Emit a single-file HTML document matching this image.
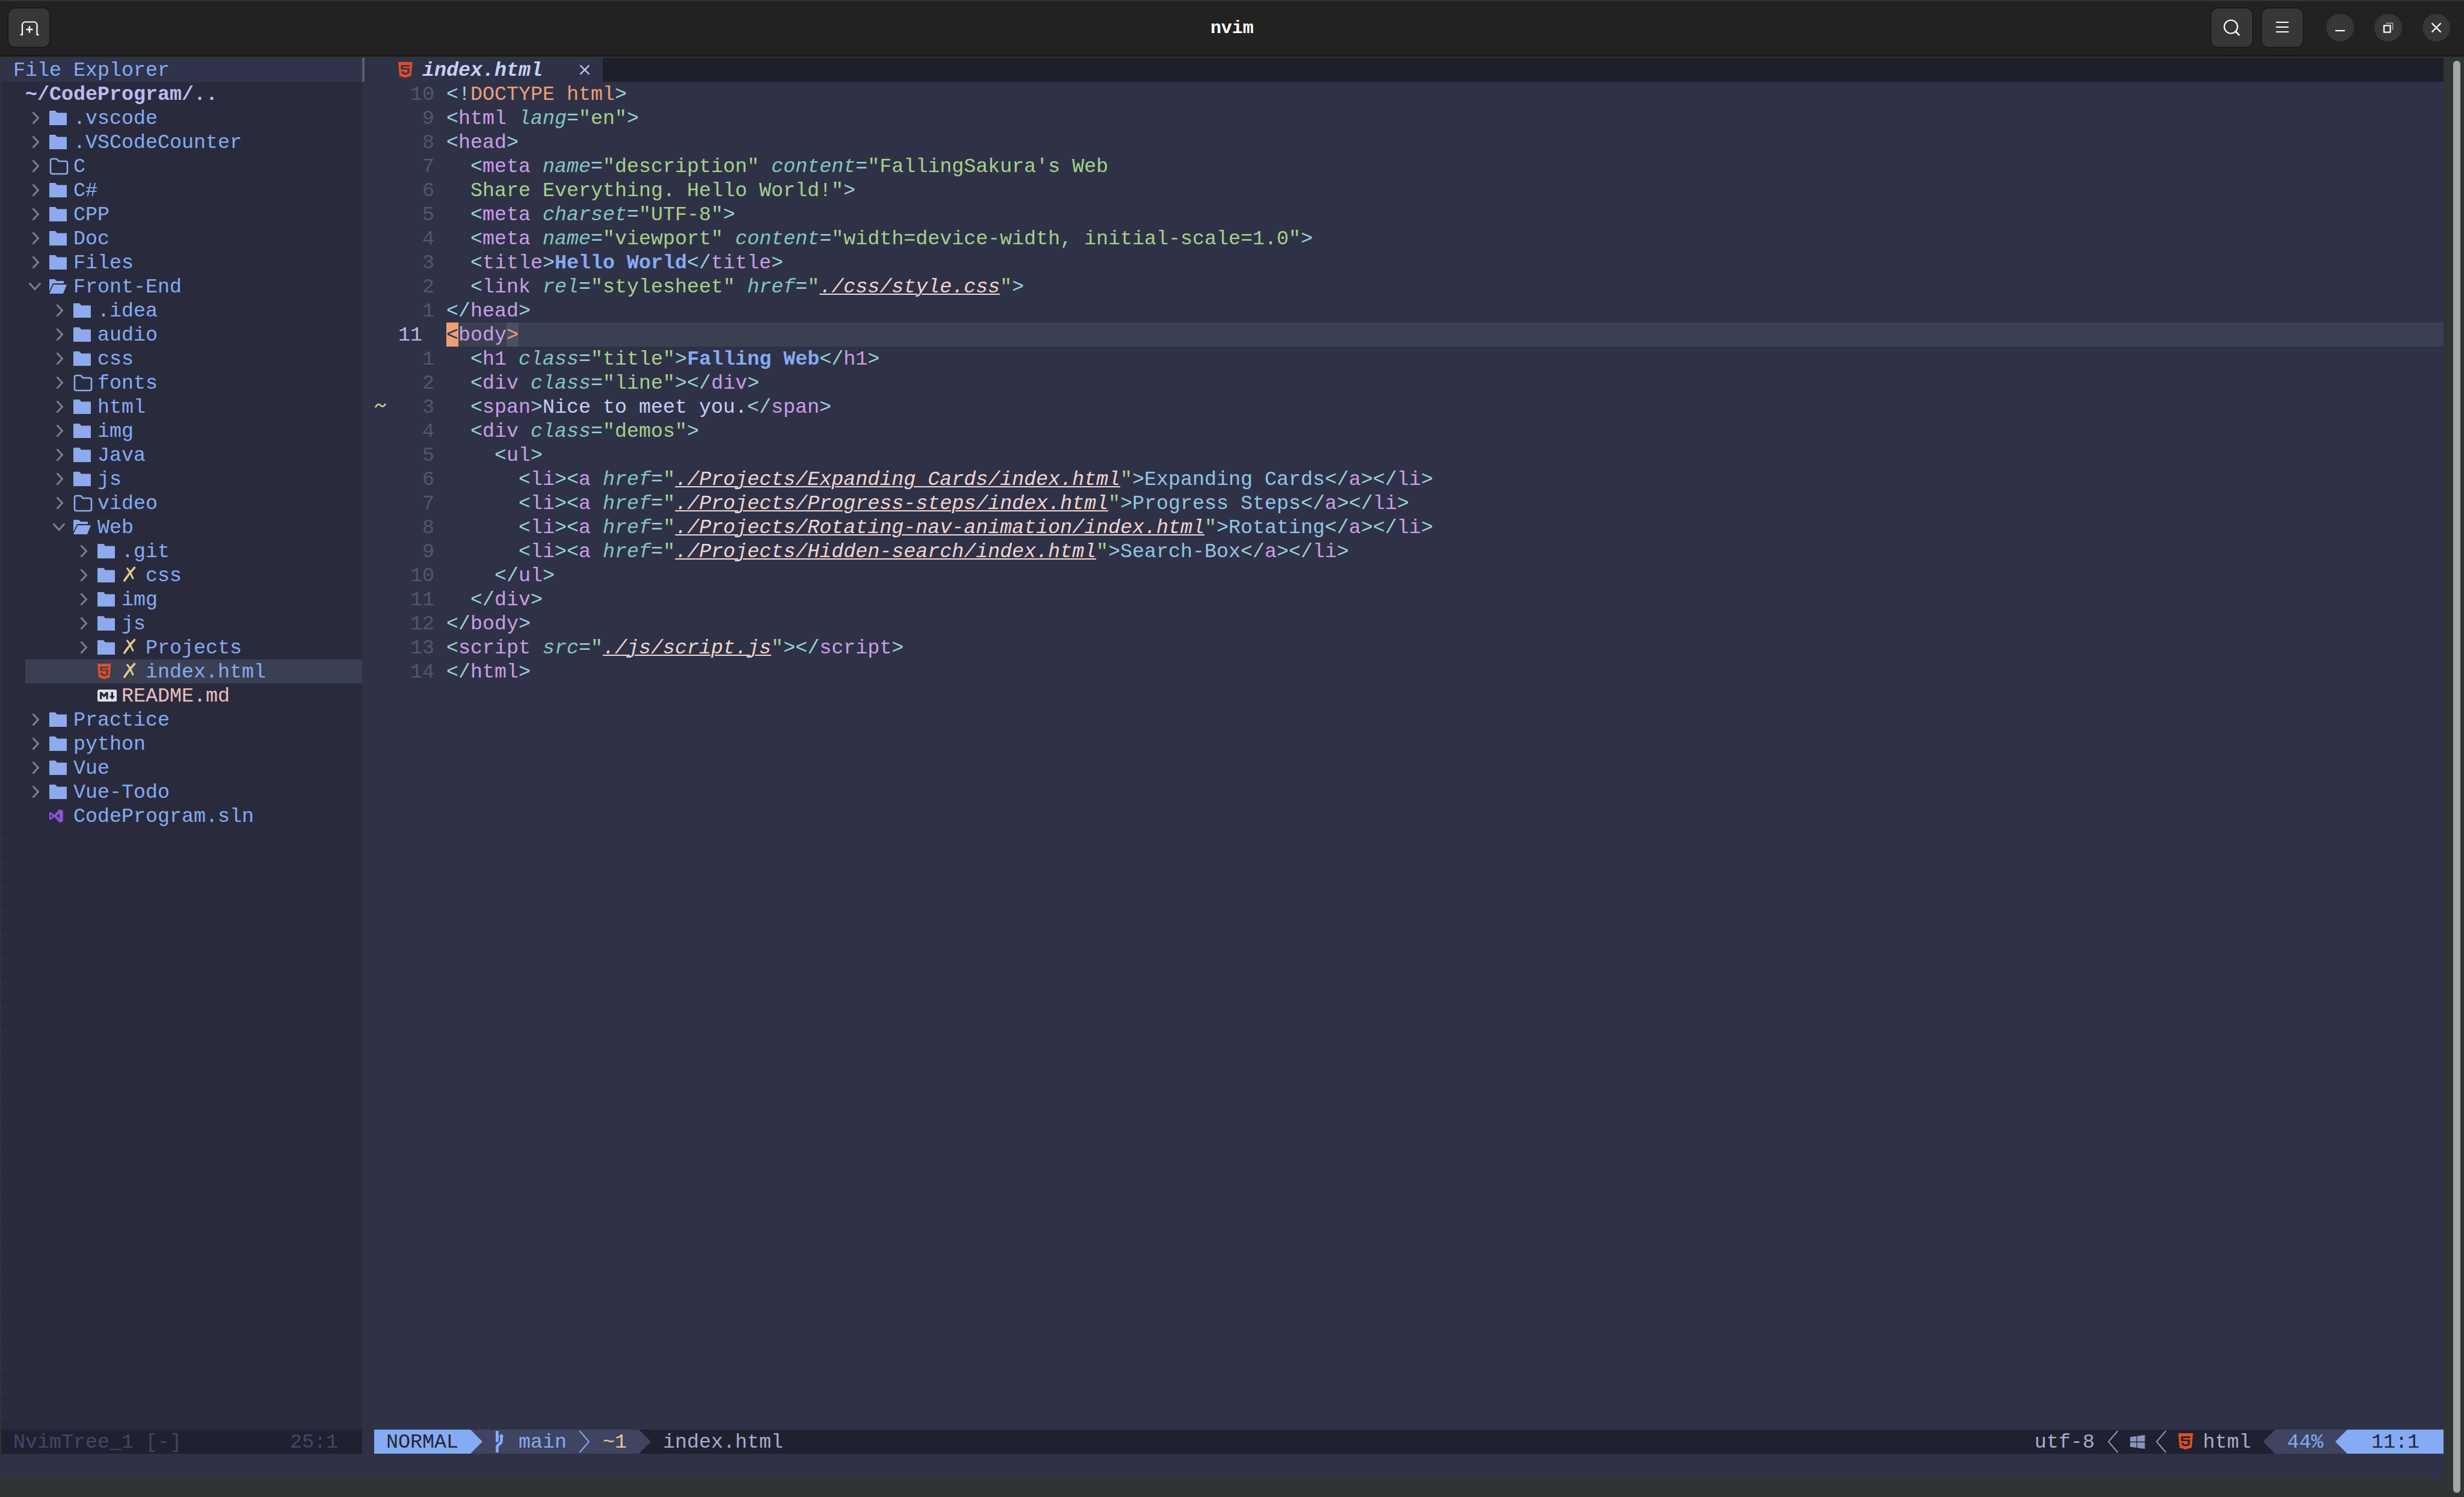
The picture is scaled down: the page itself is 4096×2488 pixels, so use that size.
<!DOCTYPE html><html><head><meta charset="utf-8"><style>
html,body{margin:0;padding:0}
body{width:4096px;height:2488px;overflow:hidden;position:relative;background:#2f3434;font-family:"Liberation Mono",monospace}
.a{position:absolute}
.t{position:absolute;height:40px;line-height:40px;white-space:pre;font-size:33.34px;font-family:"Liberation Mono",monospace}
.d{color:#99d1db} .tg{color:#ca9ee6} .at{color:#81c8be;font-style:italic} .s{color:#a6d189}
.u{color:#f2d5cf;font-style:italic;text-decoration:underline;text-underline-offset:2px;text-decoration-thickness:2px}
.p{color:#ef9f76} .x{color:#c6d0f5} .b{color:#84abf4;font-weight:bold} .l{color:#8fc6e4}
.ln{color:#51576d}
.fn{color:#84abf4}
</style></head><body>
<div class="a" style="left:0px;top:0px;width:4096px;height:92px;background:#222222;"></div>
<div class="a" style="left:0px;top:0px;width:4096px;height:2px;background:#333333;"></div>
<div class="a" style="left:0px;top:92px;width:4096px;height:2px;background:#181818;"></div>
<div class="a" style="left:14px;top:14px;width:68px;height:64px;background:#373737;border-radius:11px;box-shadow:0 0 0 1.5px #171717"></div>
<svg class="a" style="left:14px;top:14px" width="68" height="64" viewBox="0 0 68 64"><path d="M19.8 43.6 H23 V27.5 a5 5 0 0 1 5 -5 H42.5 a5 5 0 0 1 5 5 V43.6 H50.5" fill="none" stroke="#fff" stroke-width="2.2"/><path d="M35 29.5 V40.5 M29.5 35 H40.5" stroke="#fff" stroke-width="2.4"/></svg>
<div class="a" style="left:0;top:0;width:4096px;height:92px;line-height:94px;text-align:center;color:#fff;font-weight:bold;font-size:29.8px;font-family:'Liberation Mono',monospace">nvim</div>
<div class="a" style="left:3676px;top:14px;width:68px;height:64px;background:#373737;border-radius:11px;box-shadow:0 0 0 1.5px #171717"></div>
<svg class="a" style="left:3676px;top:14px" width="68" height="64" viewBox="0 0 68 64"><circle cx="32.5" cy="30.5" r="11" fill="none" stroke="#fff" stroke-width="2.2"/><path d="M40.5 38.5 L46 44" stroke="#fff" stroke-width="2.6" stroke-linecap="round"/></svg>
<div class="a" style="left:3760px;top:14px;width:68px;height:64px;background:#373737;border-radius:11px;box-shadow:0 0 0 1.5px #171717"></div>
<svg class="a" style="left:3760px;top:14px" width="68" height="64" viewBox="0 0 68 64"><path d="M23.5 23 H44.5 M23.5 31 H44.5 M23.5 39 H44.5" stroke="#fff" stroke-width="2.2"/></svg>
<div class="a" style="left:3867px;top:23px;width:46px;height:46px;border-radius:50%;background:#373737"></div>
<div class="a" style="left:3947px;top:23px;width:46px;height:46px;border-radius:50%;background:#373737"></div>
<div class="a" style="left:4027px;top:23px;width:46px;height:46px;border-radius:50%;background:#373737"></div>
<svg class="a" style="left:3867px;top:23px" width="46" height="46"><path d="M15 28 H31" stroke="#fff" stroke-width="2.2"/></svg>
<svg class="a" style="left:3947px;top:23px" width="46" height="46"><rect x="16" y="19.5" width="10.5" height="11" fill="none" stroke="#fff" stroke-width="2.2"/><path d="M19.5 15.5 H30.5 V27" fill="none" stroke="#9a9a9a" stroke-width="1.8"/></svg>
<svg class="a" style="left:4027px;top:23px" width="46" height="46"><path d="M15.5 15.5 L30.5 30.5 M30.5 15.5 L15.5 30.5" stroke="#fff" stroke-width="2.4"/></svg>
<div class="a" style="left:2px;top:96px;width:600px;height:2280px;background:#292b3d;"></div>
<div class="a" style="left:602px;top:96px;width:3460px;height:2360px;background:#2f3247;"></div>
<div class="a" style="left:2px;top:2416px;width:600px;height:40px;background:#2f3247;"></div>
<div class="a" style="left:2px;top:96px;width:600px;height:40px;background:#30334a;"></div>
<div class="a" style="left:1002px;top:96px;width:3060px;height:40px;background:#1d1f2c;"></div>
<div class="a" style="left:602px;top:96px;width:4px;height:40px;background:#5b5f73;"></div>
<div class="a" style="left:602px;top:136px;width:6px;height:2240px;background:#2e3243;"></div>
<div class="a" style="left:4078px;top:101px;width:12px;height:2380px;border-radius:6px;background:#a6a8a8"></div>
<div class="t" style="left:22px;top:97px;"><span class="fn">File Explorer</span></div>
<svg class="a" style="left:662px;top:102.7px" width="23.5" height="26.2" viewBox="0 0 22.5 25.7" preserveAspectRatio="none"><path fill-rule="evenodd" fill="#e44d26" d="M0 0 H22.5 L20.5 22.8 L11.25 25.7 L2 22.8 Z M4.3 5.1 H18.5 V7.6 H7.4 V10 H17.8 V18.6 L11.2 20.9 L5.3 18.6 V15 H8.3 V16.9 L11.2 17.9 L14.7 16.9 V12.3 H4.3 Z"/></svg>
<div class="t" style="left:702px;top:97px;font-weight:bold;font-style:italic"><span class="x">index.html</span></div>
<svg class="a" style="left:962px;top:106px" width="20" height="20"><path d="M2.5 2.5 L17.5 17.5 M17.5 2.5 L2.5 17.5" stroke="#c6d0f5" stroke-width="2.3"/></svg>
<div class="t" style="left:42px;top:137px;color:#babbf1;font-weight:bold">~/CodeProgram/..</div>
<div class="a" style="left:42px;top:1096px;width:560px;height:40px;background:#3b3f52;"></div>
<svg class="a" style="left:48px;top:184px" width="24" height="24"><path d="M7.3 3.2 L15.5 12 L7.3 20.8" fill="none" stroke="#7c8196" stroke-width="2.9" stroke-linecap="round"/></svg>
<svg class="a" style="left:82px;top:184px" width="29" height="24" viewBox="0 0 29 24"><path d="M0 1 Q0 0 1 0 H10 L13 3.5 H28 Q29 3.5 29 4.5 V24 H0 Z" fill="#8caaee"/></svg>
<div class="t" style="left:122px;top:177px;"><span class="fn">.vscode</span></div>
<svg class="a" style="left:48px;top:224px" width="24" height="24"><path d="M7.3 3.2 L15.5 12 L7.3 20.8" fill="none" stroke="#7c8196" stroke-width="2.9" stroke-linecap="round"/></svg>
<svg class="a" style="left:82px;top:224px" width="29" height="24" viewBox="0 0 29 24"><path d="M0 1 Q0 0 1 0 H10 L13 3.5 H28 Q29 3.5 29 4.5 V24 H0 Z" fill="#8caaee"/></svg>
<div class="t" style="left:122px;top:217px;"><span class="fn">.VSCodeCounter</span></div>
<svg class="a" style="left:48px;top:264px" width="24" height="24"><path d="M7.3 3.2 L15.5 12 L7.3 20.8" fill="none" stroke="#7c8196" stroke-width="2.9" stroke-linecap="round"/></svg>
<svg class="a" style="left:82px;top:262px" width="32" height="29" viewBox="0 0 32 29"><path d="M2 5 Q2 2 5 2 H12 L16 6 H27 Q30 6 30 9 V24 Q30 27 27 27 H5 Q2 27 2 24 Z" fill="none" stroke="#8caaee" stroke-width="2.6" stroke-linejoin="round"/></svg>
<div class="t" style="left:122px;top:257px;"><span class="fn">C</span></div>
<svg class="a" style="left:48px;top:304px" width="24" height="24"><path d="M7.3 3.2 L15.5 12 L7.3 20.8" fill="none" stroke="#7c8196" stroke-width="2.9" stroke-linecap="round"/></svg>
<svg class="a" style="left:82px;top:304px" width="29" height="24" viewBox="0 0 29 24"><path d="M0 1 Q0 0 1 0 H10 L13 3.5 H28 Q29 3.5 29 4.5 V24 H0 Z" fill="#8caaee"/></svg>
<div class="t" style="left:122px;top:297px;"><span class="fn">C#</span></div>
<svg class="a" style="left:48px;top:344px" width="24" height="24"><path d="M7.3 3.2 L15.5 12 L7.3 20.8" fill="none" stroke="#7c8196" stroke-width="2.9" stroke-linecap="round"/></svg>
<svg class="a" style="left:82px;top:344px" width="29" height="24" viewBox="0 0 29 24"><path d="M0 1 Q0 0 1 0 H10 L13 3.5 H28 Q29 3.5 29 4.5 V24 H0 Z" fill="#8caaee"/></svg>
<div class="t" style="left:122px;top:337px;"><span class="fn">CPP</span></div>
<svg class="a" style="left:48px;top:384px" width="24" height="24"><path d="M7.3 3.2 L15.5 12 L7.3 20.8" fill="none" stroke="#7c8196" stroke-width="2.9" stroke-linecap="round"/></svg>
<svg class="a" style="left:82px;top:384px" width="29" height="24" viewBox="0 0 29 24"><path d="M0 1 Q0 0 1 0 H10 L13 3.5 H28 Q29 3.5 29 4.5 V24 H0 Z" fill="#8caaee"/></svg>
<div class="t" style="left:122px;top:377px;"><span class="fn">Doc</span></div>
<svg class="a" style="left:48px;top:424px" width="24" height="24"><path d="M7.3 3.2 L15.5 12 L7.3 20.8" fill="none" stroke="#7c8196" stroke-width="2.9" stroke-linecap="round"/></svg>
<svg class="a" style="left:82px;top:424px" width="29" height="24" viewBox="0 0 29 24"><path d="M0 1 Q0 0 1 0 H10 L13 3.5 H28 Q29 3.5 29 4.5 V24 H0 Z" fill="#8caaee"/></svg>
<div class="t" style="left:122px;top:417px;"><span class="fn">Files</span></div>
<svg class="a" style="left:46px;top:464px" width="24" height="24"><path d="M3.5 7.3 L12 16.7 L20.5 7.3" fill="none" stroke="#7c8196" stroke-width="2.9" stroke-linecap="round"/></svg>
<svg class="a" style="left:82px;top:464px" width="29" height="24" viewBox="0 0 29 24"><path d="M0 1 Q0 0 1 0 H9 L12 3 H24 V7 H6 L0 20 Z" fill="#8caaee"/><path d="M7 9 H29 L23 24 H0 Z" fill="#8caaee"/></svg>
<div class="t" style="left:122px;top:457px;"><span class="fn">Front-End</span></div>
<svg class="a" style="left:88px;top:504px" width="24" height="24"><path d="M7.3 3.2 L15.5 12 L7.3 20.8" fill="none" stroke="#7c8196" stroke-width="2.9" stroke-linecap="round"/></svg>
<svg class="a" style="left:122px;top:504px" width="29" height="24" viewBox="0 0 29 24"><path d="M0 1 Q0 0 1 0 H10 L13 3.5 H28 Q29 3.5 29 4.5 V24 H0 Z" fill="#8caaee"/></svg>
<div class="t" style="left:162px;top:497px;"><span class="fn">.idea</span></div>
<svg class="a" style="left:88px;top:544px" width="24" height="24"><path d="M7.3 3.2 L15.5 12 L7.3 20.8" fill="none" stroke="#7c8196" stroke-width="2.9" stroke-linecap="round"/></svg>
<svg class="a" style="left:122px;top:544px" width="29" height="24" viewBox="0 0 29 24"><path d="M0 1 Q0 0 1 0 H10 L13 3.5 H28 Q29 3.5 29 4.5 V24 H0 Z" fill="#8caaee"/></svg>
<div class="t" style="left:162px;top:537px;"><span class="fn">audio</span></div>
<svg class="a" style="left:88px;top:584px" width="24" height="24"><path d="M7.3 3.2 L15.5 12 L7.3 20.8" fill="none" stroke="#7c8196" stroke-width="2.9" stroke-linecap="round"/></svg>
<svg class="a" style="left:122px;top:584px" width="29" height="24" viewBox="0 0 29 24"><path d="M0 1 Q0 0 1 0 H10 L13 3.5 H28 Q29 3.5 29 4.5 V24 H0 Z" fill="#8caaee"/></svg>
<div class="t" style="left:162px;top:577px;"><span class="fn">css</span></div>
<svg class="a" style="left:88px;top:624px" width="24" height="24"><path d="M7.3 3.2 L15.5 12 L7.3 20.8" fill="none" stroke="#7c8196" stroke-width="2.9" stroke-linecap="round"/></svg>
<svg class="a" style="left:122px;top:622px" width="32" height="29" viewBox="0 0 32 29"><path d="M2 5 Q2 2 5 2 H12 L16 6 H27 Q30 6 30 9 V24 Q30 27 27 27 H5 Q2 27 2 24 Z" fill="none" stroke="#8caaee" stroke-width="2.6" stroke-linejoin="round"/></svg>
<div class="t" style="left:162px;top:617px;"><span class="fn">fonts</span></div>
<svg class="a" style="left:88px;top:664px" width="24" height="24"><path d="M7.3 3.2 L15.5 12 L7.3 20.8" fill="none" stroke="#7c8196" stroke-width="2.9" stroke-linecap="round"/></svg>
<svg class="a" style="left:122px;top:664px" width="29" height="24" viewBox="0 0 29 24"><path d="M0 1 Q0 0 1 0 H10 L13 3.5 H28 Q29 3.5 29 4.5 V24 H0 Z" fill="#8caaee"/></svg>
<div class="t" style="left:162px;top:657px;"><span class="fn">html</span></div>
<svg class="a" style="left:88px;top:704px" width="24" height="24"><path d="M7.3 3.2 L15.5 12 L7.3 20.8" fill="none" stroke="#7c8196" stroke-width="2.9" stroke-linecap="round"/></svg>
<svg class="a" style="left:122px;top:704px" width="29" height="24" viewBox="0 0 29 24"><path d="M0 1 Q0 0 1 0 H10 L13 3.5 H28 Q29 3.5 29 4.5 V24 H0 Z" fill="#8caaee"/></svg>
<div class="t" style="left:162px;top:697px;"><span class="fn">img</span></div>
<svg class="a" style="left:88px;top:744px" width="24" height="24"><path d="M7.3 3.2 L15.5 12 L7.3 20.8" fill="none" stroke="#7c8196" stroke-width="2.9" stroke-linecap="round"/></svg>
<svg class="a" style="left:122px;top:744px" width="29" height="24" viewBox="0 0 29 24"><path d="M0 1 Q0 0 1 0 H10 L13 3.5 H28 Q29 3.5 29 4.5 V24 H0 Z" fill="#8caaee"/></svg>
<div class="t" style="left:162px;top:737px;"><span class="fn">Java</span></div>
<svg class="a" style="left:88px;top:784px" width="24" height="24"><path d="M7.3 3.2 L15.5 12 L7.3 20.8" fill="none" stroke="#7c8196" stroke-width="2.9" stroke-linecap="round"/></svg>
<svg class="a" style="left:122px;top:784px" width="29" height="24" viewBox="0 0 29 24"><path d="M0 1 Q0 0 1 0 H10 L13 3.5 H28 Q29 3.5 29 4.5 V24 H0 Z" fill="#8caaee"/></svg>
<div class="t" style="left:162px;top:777px;"><span class="fn">js</span></div>
<svg class="a" style="left:88px;top:824px" width="24" height="24"><path d="M7.3 3.2 L15.5 12 L7.3 20.8" fill="none" stroke="#7c8196" stroke-width="2.9" stroke-linecap="round"/></svg>
<svg class="a" style="left:122px;top:822px" width="32" height="29" viewBox="0 0 32 29"><path d="M2 5 Q2 2 5 2 H12 L16 6 H27 Q30 6 30 9 V24 Q30 27 27 27 H5 Q2 27 2 24 Z" fill="none" stroke="#8caaee" stroke-width="2.6" stroke-linejoin="round"/></svg>
<div class="t" style="left:162px;top:817px;"><span class="fn">video</span></div>
<svg class="a" style="left:86px;top:864px" width="24" height="24"><path d="M3.5 7.3 L12 16.7 L20.5 7.3" fill="none" stroke="#7c8196" stroke-width="2.9" stroke-linecap="round"/></svg>
<svg class="a" style="left:122px;top:864px" width="29" height="24" viewBox="0 0 29 24"><path d="M0 1 Q0 0 1 0 H9 L12 3 H24 V7 H6 L0 20 Z" fill="#8caaee"/><path d="M7 9 H29 L23 24 H0 Z" fill="#8caaee"/></svg>
<div class="t" style="left:162px;top:857px;"><span class="fn">Web</span></div>
<svg class="a" style="left:128px;top:904px" width="24" height="24"><path d="M7.3 3.2 L15.5 12 L7.3 20.8" fill="none" stroke="#7c8196" stroke-width="2.9" stroke-linecap="round"/></svg>
<svg class="a" style="left:162px;top:904px" width="29" height="24" viewBox="0 0 29 24"><path d="M0 1 Q0 0 1 0 H10 L13 3.5 H28 Q29 3.5 29 4.5 V24 H0 Z" fill="#8caaee"/></svg>
<div class="t" style="left:202px;top:897px;"><span class="fn">.git</span></div>
<svg class="a" style="left:128px;top:944px" width="24" height="24"><path d="M7.3 3.2 L15.5 12 L7.3 20.8" fill="none" stroke="#7c8196" stroke-width="2.9" stroke-linecap="round"/></svg>
<svg class="a" style="left:162px;top:944px" width="29" height="24" viewBox="0 0 29 24"><path d="M0 1 Q0 0 1 0 H10 L13 3.5 H28 Q29 3.5 29 4.5 V24 H0 Z" fill="#8caaee"/></svg>
<svg class="a" style="left:202px;top:936px" width="26" height="40"><path d="M21.6 7.5 Q13 16.5 4.8 29.1" fill="none" stroke="#e5c890" stroke-width="3.6" stroke-linecap="round"/><path d="M9.6 8.8 Q14 14 18.9 25.1" fill="none" stroke="#e5c890" stroke-width="3" stroke-linecap="round"/></svg>
<div class="t" style="left:242px;top:937px;"><span class="fn">css</span></div>
<svg class="a" style="left:128px;top:984px" width="24" height="24"><path d="M7.3 3.2 L15.5 12 L7.3 20.8" fill="none" stroke="#7c8196" stroke-width="2.9" stroke-linecap="round"/></svg>
<svg class="a" style="left:162px;top:984px" width="29" height="24" viewBox="0 0 29 24"><path d="M0 1 Q0 0 1 0 H10 L13 3.5 H28 Q29 3.5 29 4.5 V24 H0 Z" fill="#8caaee"/></svg>
<div class="t" style="left:202px;top:977px;"><span class="fn">img</span></div>
<svg class="a" style="left:128px;top:1024px" width="24" height="24"><path d="M7.3 3.2 L15.5 12 L7.3 20.8" fill="none" stroke="#7c8196" stroke-width="2.9" stroke-linecap="round"/></svg>
<svg class="a" style="left:162px;top:1024px" width="29" height="24" viewBox="0 0 29 24"><path d="M0 1 Q0 0 1 0 H10 L13 3.5 H28 Q29 3.5 29 4.5 V24 H0 Z" fill="#8caaee"/></svg>
<div class="t" style="left:202px;top:1017px;"><span class="fn">js</span></div>
<svg class="a" style="left:128px;top:1064px" width="24" height="24"><path d="M7.3 3.2 L15.5 12 L7.3 20.8" fill="none" stroke="#7c8196" stroke-width="2.9" stroke-linecap="round"/></svg>
<svg class="a" style="left:162px;top:1064px" width="29" height="24" viewBox="0 0 29 24"><path d="M0 1 Q0 0 1 0 H10 L13 3.5 H28 Q29 3.5 29 4.5 V24 H0 Z" fill="#8caaee"/></svg>
<svg class="a" style="left:202px;top:1056px" width="26" height="40"><path d="M21.6 7.5 Q13 16.5 4.8 29.1" fill="none" stroke="#e5c890" stroke-width="3.6" stroke-linecap="round"/><path d="M9.6 8.8 Q14 14 18.9 25.1" fill="none" stroke="#e5c890" stroke-width="3" stroke-linecap="round"/></svg>
<div class="t" style="left:242px;top:1057px;"><span class="fn">Projects</span></div>
<svg class="a" style="left:48px;top:1184px" width="24" height="24"><path d="M7.3 3.2 L15.5 12 L7.3 20.8" fill="none" stroke="#7c8196" stroke-width="2.9" stroke-linecap="round"/></svg>
<svg class="a" style="left:82px;top:1184px" width="29" height="24" viewBox="0 0 29 24"><path d="M0 1 Q0 0 1 0 H10 L13 3.5 H28 Q29 3.5 29 4.5 V24 H0 Z" fill="#8caaee"/></svg>
<div class="t" style="left:122px;top:1177px;"><span class="fn">Practice</span></div>
<svg class="a" style="left:48px;top:1224px" width="24" height="24"><path d="M7.3 3.2 L15.5 12 L7.3 20.8" fill="none" stroke="#7c8196" stroke-width="2.9" stroke-linecap="round"/></svg>
<svg class="a" style="left:82px;top:1224px" width="29" height="24" viewBox="0 0 29 24"><path d="M0 1 Q0 0 1 0 H10 L13 3.5 H28 Q29 3.5 29 4.5 V24 H0 Z" fill="#8caaee"/></svg>
<div class="t" style="left:122px;top:1217px;"><span class="fn">python</span></div>
<svg class="a" style="left:48px;top:1264px" width="24" height="24"><path d="M7.3 3.2 L15.5 12 L7.3 20.8" fill="none" stroke="#7c8196" stroke-width="2.9" stroke-linecap="round"/></svg>
<svg class="a" style="left:82px;top:1264px" width="29" height="24" viewBox="0 0 29 24"><path d="M0 1 Q0 0 1 0 H10 L13 3.5 H28 Q29 3.5 29 4.5 V24 H0 Z" fill="#8caaee"/></svg>
<div class="t" style="left:122px;top:1257px;"><span class="fn">Vue</span></div>
<svg class="a" style="left:48px;top:1304px" width="24" height="24"><path d="M7.3 3.2 L15.5 12 L7.3 20.8" fill="none" stroke="#7c8196" stroke-width="2.9" stroke-linecap="round"/></svg>
<svg class="a" style="left:82px;top:1304px" width="29" height="24" viewBox="0 0 29 24"><path d="M0 1 Q0 0 1 0 H10 L13 3.5 H28 Q29 3.5 29 4.5 V24 H0 Z" fill="#8caaee"/></svg>
<div class="t" style="left:122px;top:1297px;"><span class="fn">Vue-Todo</span></div>
<svg class="a" style="left:162.4px;top:1102.9px" width="22.5" height="25.7" viewBox="0 0 22.5 25.7" preserveAspectRatio="none"><path fill-rule="evenodd" fill="#e44d26" d="M0 0 H22.5 L20.5 22.8 L11.25 25.7 L2 22.8 Z M4.3 5.1 H18.5 V7.6 H7.4 V10 H17.8 V18.6 L11.2 20.9 L5.3 18.6 V15 H8.3 V16.9 L11.2 17.9 L14.7 16.9 V12.3 H4.3 Z"/></svg>
<svg class="a" style="left:202px;top:1096px" width="26" height="40"><path d="M21.6 7.5 Q13 16.5 4.8 29.1" fill="none" stroke="#e5c890" stroke-width="3.6" stroke-linecap="round"/><path d="M9.6 8.8 Q14 14 18.9 25.1" fill="none" stroke="#e5c890" stroke-width="3" stroke-linecap="round"/></svg>
<div class="t" style="left:242px;top:1097px;"><span class="fn">index.html</span></div>
<svg class="a" style="left:162px;top:1145.7px" width="32.3" height="20.3" viewBox="0 0 32.3 20.3"><rect x="0" y="0" width="32.3" height="20.3" rx="3.5" fill="#dddde3"/><path d="M4 16 V4.3 H7.5 L10.8 8.5 L14.1 4.3 H17.6 V16 H14.4 V9.2 L10.8 13.2 L7.2 9.2 V16 Z M22.7 4.3 H26.1 V10.7 H29.1 L24.4 16.8 L19.8 10.7 H22.7 Z" fill="#23253a"/></svg>
<div class="t" style="left:202px;top:1137px;color:#eebebe">README.md</div>
<svg class="a" style="left:76px;top:1336px" width="40" height="40" viewBox="0 0 40 40"><path fill-rule="evenodd" fill="#8a55d8" d="M5.9 14.5 L8.3 13.7 L14.2 18.5 L23 8.8 L28.7 11.2 V28.9 L23 31.3 L14.2 21.5 L8.3 26.7 L5.9 25.7 Z M8 17.2 V23.2 L11.5 20.2 Z M18 20 L22.7 16 V24.2 Z"/></svg>
<div class="t" style="left:122px;top:1337px;"><span class="fn">CodeProgram.sln</span></div>
<div class="t" style="left:2px;top:1377px;color:#2e3043">~</div>
<div class="t" style="left:2px;top:1417px;color:#2e3043">~</div>
<div class="t" style="left:2px;top:1457px;color:#2e3043">~</div>
<div class="t" style="left:2px;top:1497px;color:#2e3043">~</div>
<div class="t" style="left:2px;top:1537px;color:#2e3043">~</div>
<div class="t" style="left:2px;top:1577px;color:#2e3043">~</div>
<div class="t" style="left:2px;top:1617px;color:#2e3043">~</div>
<div class="t" style="left:2px;top:1657px;color:#2e3043">~</div>
<div class="t" style="left:2px;top:1697px;color:#2e3043">~</div>
<div class="t" style="left:2px;top:1737px;color:#2e3043">~</div>
<div class="t" style="left:2px;top:1777px;color:#2e3043">~</div>
<div class="t" style="left:2px;top:1817px;color:#2e3043">~</div>
<div class="t" style="left:2px;top:1857px;color:#2e3043">~</div>
<div class="t" style="left:2px;top:1897px;color:#2e3043">~</div>
<div class="t" style="left:2px;top:1937px;color:#2e3043">~</div>
<div class="t" style="left:2px;top:1977px;color:#2e3043">~</div>
<div class="t" style="left:2px;top:2017px;color:#2e3043">~</div>
<div class="t" style="left:2px;top:2057px;color:#2e3043">~</div>
<div class="t" style="left:2px;top:2097px;color:#2e3043">~</div>
<div class="t" style="left:2px;top:2137px;color:#2e3043">~</div>
<div class="t" style="left:2px;top:2177px;color:#2e3043">~</div>
<div class="t" style="left:2px;top:2217px;color:#2e3043">~</div>
<div class="t" style="left:2px;top:2257px;color:#2e3043">~</div>
<div class="t" style="left:2px;top:2297px;color:#2e3043">~</div>
<div class="t" style="left:2px;top:2337px;color:#2e3043">~</div>
<div class="a" style="left:742px;top:536px;width:3320px;height:40px;background:#3b3f52;"></div>
<div class="t" style="left:682px;top:137px;"><span class="ln">10</span></div>
<div class="t" style="left:742px;top:137px;"><span class="d">&lt;!</span><span class="p">DOCTYPE html</span><span class="d">&gt;</span></div>
<div class="t" style="left:702px;top:177px;"><span class="ln">9</span></div>
<div class="t" style="left:742px;top:177px;"><span class="d">&lt;</span><span class="tg">html</span> <span class="at">lang</span><span class="d">=</span><span class="s">&quot;en&quot;</span><span class="d">&gt;</span></div>
<div class="t" style="left:702px;top:217px;"><span class="ln">8</span></div>
<div class="t" style="left:742px;top:217px;"><span class="d">&lt;</span><span class="tg">head</span><span class="d">&gt;</span></div>
<div class="t" style="left:702px;top:257px;"><span class="ln">7</span></div>
<div class="t" style="left:742px;top:257px;">  <span class="d">&lt;</span><span class="tg">meta</span> <span class="at">name</span><span class="d">=</span><span class="s">&quot;description&quot;</span> <span class="at">content</span><span class="d">=</span><span class="s">&quot;FallingSakura&#x27;s Web</span></div>
<div class="t" style="left:702px;top:297px;"><span class="ln">6</span></div>
<div class="t" style="left:742px;top:297px;">  <span class="s">Share Everything. Hello World!&quot;</span><span class="d">&gt;</span></div>
<div class="t" style="left:702px;top:337px;"><span class="ln">5</span></div>
<div class="t" style="left:742px;top:337px;">  <span class="d">&lt;</span><span class="tg">meta</span> <span class="at">charset</span><span class="d">=</span><span class="s">&quot;UTF-8&quot;</span><span class="d">&gt;</span></div>
<div class="t" style="left:702px;top:377px;"><span class="ln">4</span></div>
<div class="t" style="left:742px;top:377px;">  <span class="d">&lt;</span><span class="tg">meta</span> <span class="at">name</span><span class="d">=</span><span class="s">&quot;viewport&quot;</span> <span class="at">content</span><span class="d">=</span><span class="s">&quot;width=device-width, initial-scale=1.0&quot;</span><span class="d">&gt;</span></div>
<div class="t" style="left:702px;top:417px;"><span class="ln">3</span></div>
<div class="t" style="left:742px;top:417px;">  <span class="d">&lt;</span><span class="tg">title</span><span class="d">&gt;</span><span class="b">Hello World</span><span class="d">&lt;/</span><span class="tg">title</span><span class="d">&gt;</span></div>
<div class="t" style="left:702px;top:457px;"><span class="ln">2</span></div>
<div class="t" style="left:742px;top:457px;">  <span class="d">&lt;</span><span class="tg">link</span> <span class="at">rel</span><span class="d">=</span><span class="s">&quot;stylesheet&quot;</span> <span class="at">href</span><span class="d">=</span><span class="s">&quot;</span><span class="u">./css/style.css</span><span class="s">&quot;</span><span class="d">&gt;</span></div>
<div class="t" style="left:702px;top:497px;"><span class="ln">1</span></div>
<div class="t" style="left:742px;top:497px;"><span class="d">&lt;/</span><span class="tg">head</span><span class="d">&gt;</span></div>
<div class="t" style="left:662px;top:537px;color:#babbf1">11</div>
<div class="t" style="left:702px;top:577px;"><span class="ln">1</span></div>
<div class="t" style="left:742px;top:577px;">  <span class="d">&lt;</span><span class="tg">h1</span> <span class="at">class</span><span class="d">=</span><span class="s">&quot;title&quot;</span><span class="d">&gt;</span><span class="b">Falling Web</span><span class="d">&lt;/</span><span class="tg">h1</span><span class="d">&gt;</span></div>
<div class="t" style="left:702px;top:617px;"><span class="ln">2</span></div>
<div class="t" style="left:742px;top:617px;">  <span class="d">&lt;</span><span class="tg">div</span> <span class="at">class</span><span class="d">=</span><span class="s">&quot;line&quot;</span><span class="d">&gt;&lt;/</span><span class="tg">div</span><span class="d">&gt;</span></div>
<div class="t" style="left:702px;top:657px;"><span class="ln">3</span></div>
<div class="t" style="left:742px;top:657px;">  <span class="d">&lt;</span><span class="tg">span</span><span class="d">&gt;</span><span class="x">Nice to meet you.</span><span class="d">&lt;/</span><span class="tg">span</span><span class="d">&gt;</span></div>
<div class="t" style="left:702px;top:697px;"><span class="ln">4</span></div>
<div class="t" style="left:742px;top:697px;">  <span class="d">&lt;</span><span class="tg">div</span> <span class="at">class</span><span class="d">=</span><span class="s">&quot;demos&quot;</span><span class="d">&gt;</span></div>
<div class="t" style="left:702px;top:737px;"><span class="ln">5</span></div>
<div class="t" style="left:742px;top:737px;">    <span class="d">&lt;</span><span class="tg">ul</span><span class="d">&gt;</span></div>
<div class="t" style="left:702px;top:777px;"><span class="ln">6</span></div>
<div class="t" style="left:742px;top:777px;">      <span class="d">&lt;</span><span class="tg">li</span><span class="d">&gt;&lt;</span><span class="tg">a</span> <span class="at">href</span><span class="d">=</span><span class="s">&quot;</span><span class="u">./Projects/Expanding Cards/index.html</span><span class="s">&quot;</span><span class="d">&gt;</span><span class="l">Expanding Cards</span><span class="d">&lt;/</span><span class="tg">a</span><span class="d">&gt;&lt;/</span><span class="tg">li</span><span class="d">&gt;</span></div>
<div class="t" style="left:702px;top:817px;"><span class="ln">7</span></div>
<div class="t" style="left:742px;top:817px;">      <span class="d">&lt;</span><span class="tg">li</span><span class="d">&gt;&lt;</span><span class="tg">a</span> <span class="at">href</span><span class="d">=</span><span class="s">&quot;</span><span class="u">./Projects/Progress-steps/index.html</span><span class="s">&quot;</span><span class="d">&gt;</span><span class="l">Progress Steps</span><span class="d">&lt;/</span><span class="tg">a</span><span class="d">&gt;&lt;/</span><span class="tg">li</span><span class="d">&gt;</span></div>
<div class="t" style="left:702px;top:857px;"><span class="ln">8</span></div>
<div class="t" style="left:742px;top:857px;">      <span class="d">&lt;</span><span class="tg">li</span><span class="d">&gt;&lt;</span><span class="tg">a</span> <span class="at">href</span><span class="d">=</span><span class="s">&quot;</span><span class="u">./Projects/Rotating-nav-animation/index.html</span><span class="s">&quot;</span><span class="d">&gt;</span><span class="l">Rotating</span><span class="d">&lt;/</span><span class="tg">a</span><span class="d">&gt;&lt;/</span><span class="tg">li</span><span class="d">&gt;</span></div>
<div class="t" style="left:702px;top:897px;"><span class="ln">9</span></div>
<div class="t" style="left:742px;top:897px;">      <span class="d">&lt;</span><span class="tg">li</span><span class="d">&gt;&lt;</span><span class="tg">a</span> <span class="at">href</span><span class="d">=</span><span class="s">&quot;</span><span class="u">./Projects/Hidden-search/index.html</span><span class="s">&quot;</span><span class="d">&gt;</span><span class="l">Search-Box</span><span class="d">&lt;/</span><span class="tg">a</span><span class="d">&gt;&lt;/</span><span class="tg">li</span><span class="d">&gt;</span></div>
<div class="t" style="left:682px;top:937px;"><span class="ln">10</span></div>
<div class="t" style="left:742px;top:937px;">    <span class="d">&lt;/</span><span class="tg">ul</span><span class="d">&gt;</span></div>
<div class="t" style="left:682px;top:977px;"><span class="ln">11</span></div>
<div class="t" style="left:742px;top:977px;">  <span class="d">&lt;/</span><span class="tg">div</span><span class="d">&gt;</span></div>
<div class="t" style="left:682px;top:1017px;"><span class="ln">12</span></div>
<div class="t" style="left:742px;top:1017px;"><span class="d">&lt;/</span><span class="tg">body</span><span class="d">&gt;</span></div>
<div class="t" style="left:682px;top:1057px;"><span class="ln">13</span></div>
<div class="t" style="left:742px;top:1057px;"><span class="d">&lt;</span><span class="tg">script</span> <span class="at">src</span><span class="d">=</span><span class="s">&quot;</span><span class="u">./js/script.js</span><span class="s">&quot;</span><span class="d">&gt;&lt;/</span><span class="tg">script</span><span class="d">&gt;</span></div>
<div class="t" style="left:682px;top:1097px;"><span class="ln">14</span></div>
<div class="t" style="left:742px;top:1097px;"><span class="d">&lt;/</span><span class="tg">html</span><span class="d">&gt;</span></div>
<div class="a" style="left:742px;top:536px;width:20px;height:40px;background:#ef9f76;"></div>
<div class="a" style="left:842px;top:536px;width:20px;height:40px;background:#4b4f63;"></div>
<div class="t" style="left:742px;top:537px;color:#2f3247">&lt;</div>
<div class="t" style="left:762px;top:537px;"><span class="tg">body</span></div>
<div class="t" style="left:842px;top:537px;color:#ef9f76">&gt;</div>
<svg class="a" style="left:622px;top:656px" width="20" height="40"><path d="M2.5 20.5 C5.5 14.5 9 15.5 10.5 17.5 C12 19.5 15.5 21.5 18.5 15.5" fill="none" stroke="#e5c890" stroke-width="2.5" stroke-linecap="round"/></svg>
<div class="a" style="left:2px;top:2376px;width:600px;height:40px;background:#1f2131;"></div>
<div class="t" style="left:22px;top:2377px;color:#41476a">NvimTree_1 [-]</div>
<div class="t" style="left:482px;top:2377px;color:#41476a">25:1</div>
<div class="a" style="left:622px;top:2376px;width:3440px;height:40px;background:#1f2130;"></div>
<div class="a" style="left:622px;top:2376px;width:160px;height:40px;background:#84abf4;"></div>
<div class="t" style="left:642px;top:2377px;color:#232634">NORMAL</div>
<div class="a" style="left:782px;top:2376px;width:280px;height:40px;background:#3f4460;"></div>
<svg class="a" style="left:782px;top:2376px" width="20" height="40"><path d="M0 0 L20 20 L0 40 Z" fill="#84abf4"/></svg>
<svg class="a" style="left:1062px;top:2376px" width="20" height="40"><path d="M0 0 L20 20 L0 40 Z" fill="#3f4460"/></svg>
<svg class="a" style="left:822px;top:2376px" width="20" height="40"><path d="M2 2 H6.9 V19.5 L2 22 Z" fill="#84abf4"/><path d="M4.5 38 V30 Q4.5 26 8 24 Q11.5 22 11.5 18 V10.5" fill="none" stroke="#84abf4" stroke-width="4.8"/><path d="M7.3 11.8 L11.5 6.4 L15.7 11.8 Z" fill="#84abf4"/></svg>
<div class="t" style="left:862px;top:2377px;color:#84abf4">main</div>
<svg class="a" style="left:962px;top:2376px" width="20" height="40"><path d="M1.5 2 L17 20 L1.5 38" fill="none" stroke="#84abf4" stroke-width="2"/></svg>
<div class="t" style="left:1002px;top:2377px;color:#e5c890">~1</div>
<div class="t" style="left:1102px;top:2377px;color:#a5adce">index.html</div>
<div class="t" style="left:3382px;top:2377px;color:#a5adce">utf-8</div>
<svg class="a" style="left:3502px;top:2376px" width="20" height="40"><path d="M18.5 2 L3 20 L18.5 38" fill="none" stroke="#8b93bd" stroke-width="2"/></svg>
<svg class="a" style="left:3582px;top:2376px" width="20" height="40"><path d="M18.5 2 L3 20 L18.5 38" fill="none" stroke="#8b93bd" stroke-width="2"/></svg>
<svg class="a" style="left:3541px;top:2384.5px" width="24.5" height="23" viewBox="0 0 20 20" preserveAspectRatio="none"><path d="M0 2.9 L8.6 1.7 V9.4 H0 Z M9.6 1.55 L20 0 V9.4 H9.6 Z M0 10.6 H8.6 V18.3 L0 17.1 Z M9.6 10.6 H20 V20 L9.6 18.45 Z" fill="#8b93bd"/></svg>
<svg class="a" style="left:3621px;top:2382px" width="24.5" height="27" viewBox="0 0 22.5 25.7" preserveAspectRatio="none"><path fill-rule="evenodd" fill="#e44d26" d="M0 0 H22.5 L20.5 22.8 L11.25 25.7 L2 22.8 Z M4.3 5.1 H18.5 V7.6 H7.4 V10 H17.8 V18.6 L11.2 20.9 L5.3 18.6 V15 H8.3 V16.9 L11.2 17.9 L14.7 16.9 V12.3 H4.3 Z"/></svg>
<div class="t" style="left:3662px;top:2377px;color:#a5adce">html</div>
<div class="a" style="left:3782px;top:2376px;width:100px;height:40px;background:#3f4460;"></div>
<svg class="a" style="left:3762px;top:2376px" width="20" height="40"><path d="M20 0 L0 20 L20 40 Z" fill="#3f4460"/></svg>
<div class="t" style="left:3802px;top:2377px;color:#84abf4">44%</div>
<div class="a" style="left:3902px;top:2376px;width:160px;height:40px;background:#84abf4;"></div>
<svg class="a" style="left:3882px;top:2376px" width="20" height="40"><rect width="20" height="40" fill="#3f4460"/><path d="M20 0 L0 20 L20 40 Z" fill="#84abf4"/></svg>
<div class="t" style="left:3942px;top:2377px;color:#232634">11:1</div>
</body></html>
